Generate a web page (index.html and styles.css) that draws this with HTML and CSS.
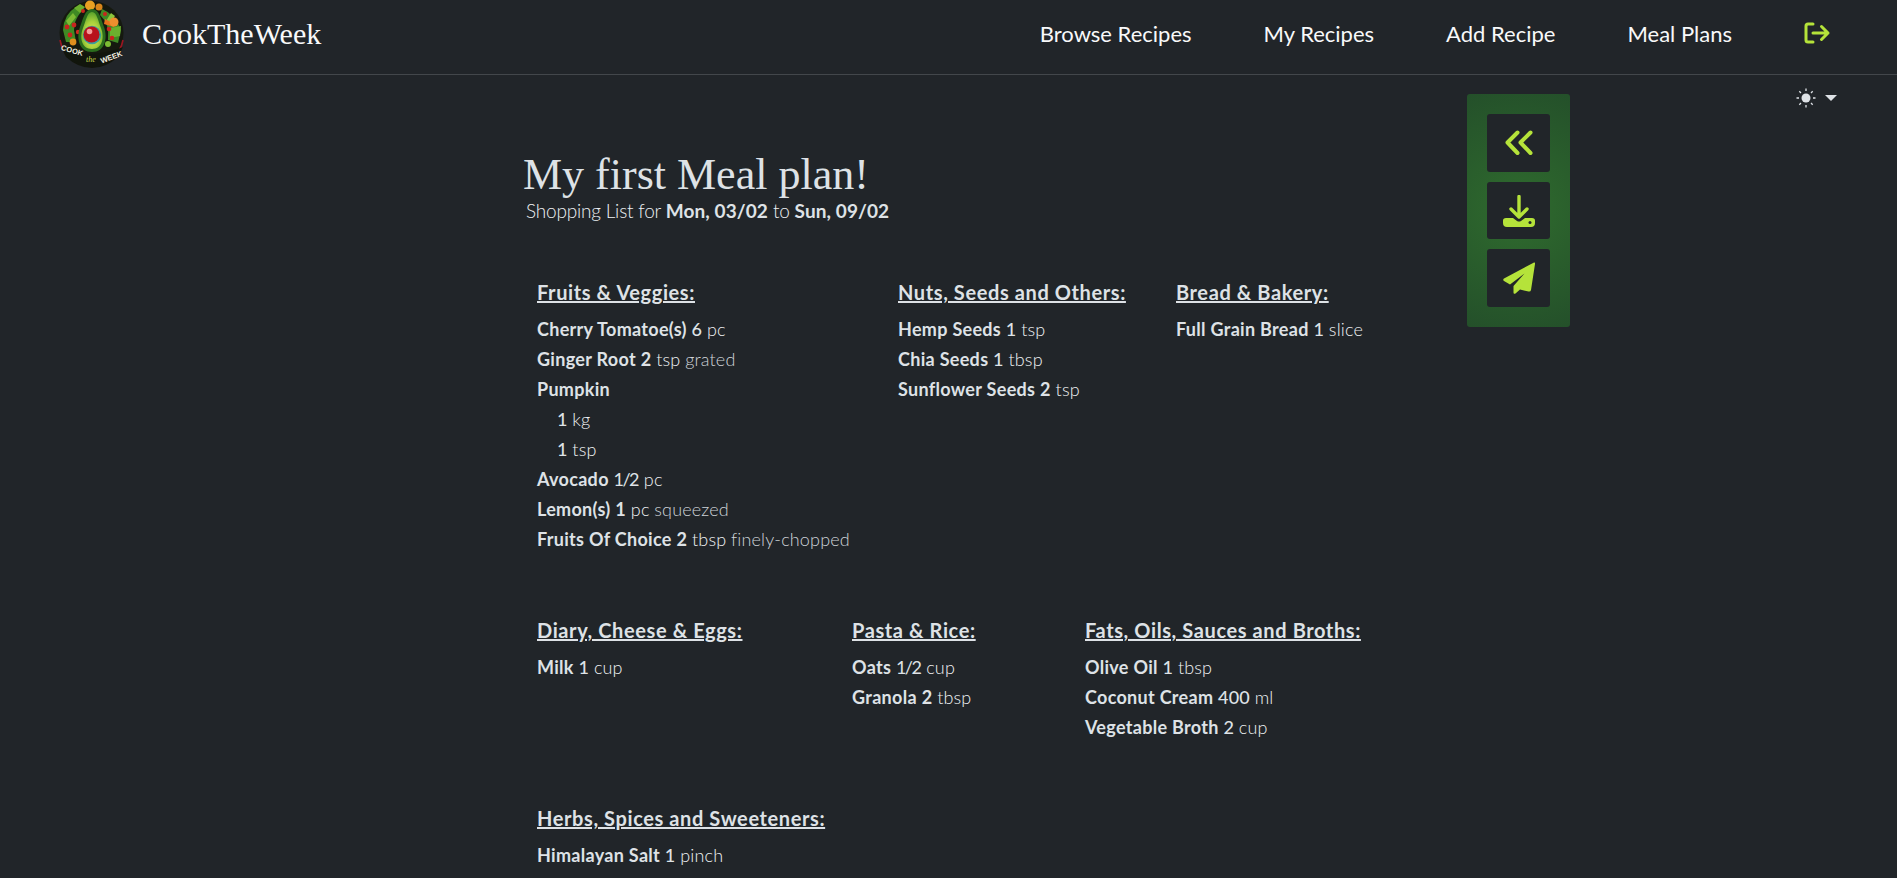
FILE: index.html
```html
<!DOCTYPE html>
<html lang="en">
<head>
<meta charset="utf-8">
<title>CookTheWeek</title>
<link rel="stylesheet" href="styles.css">
</head>
<body>
<header class="topbar">
  <a class="brand" href="#">
    <svg class="logo" viewBox="0 0 68 68" aria-hidden="true">
      <defs>
        <radialGradient id="flesh" cx="50%" cy="62%" r="60%">
          <stop offset="0" stop-color="#e3e95a"/>
          <stop offset="0.6" stop-color="#a9d13c"/>
          <stop offset="1" stop-color="#5fa52c"/>
        </radialGradient>
      </defs>
      <circle cx="33.500" cy="33" r="32" fill="#15190f"/>
      <path d="M2 40 A32 32 0 0 0 65 40" fill="none" stroke="#9c1520" stroke-width="1.600"/>
      <path d="M5 30 Q6 14 18 7 L23 12 Q16 20 16 30 L18 42 L8 42 Z" fill="#3f8a24"/>
      <path d="M16 8 L22 4 L27 7 L22 13 Z" fill="#6bb02e"/>
      <path d="M8 21 L15 13 L18 17 L11 26 Z" fill="#7cbb33"/>
      <path d="M44 9 Q57 14 63 30 L60 43 L50 40 Q52 24 42 15 Z" fill="#3f8a24"/>
      <path d="M52 28 L63 26 L62 36 L52 38 Z" fill="#6bb02e"/>
      <path d="M48 21 L53 13 L57 16 L52 24 Z" fill="#8cc63a"/>
      <path d="M47 19 L57 24 L56 27 L46 24 Z" fill="#e5721e"/>
      <circle cx="32" cy="5.500" r="5" fill="#e8a022"/>
      <circle cx="41" cy="7" r="3.500" fill="#d8851a"/>
      <circle cx="56" cy="22" r="4.500" fill="#ee8f2e"/>
      <circle cx="9" cy="27" r="2.400" fill="#c8251e"/>
      <circle cx="16" cy="25" r="2.400" fill="#c8251e"/>
      <circle cx="12" cy="35" r="2.400" fill="#c8251e"/>
      <circle cx="20" cy="32" r="2.200" fill="#d02a20"/>
      <circle cx="25" cy="11" r="2" fill="#c8251e"/>
      <circle cx="47" cy="14" r="2" fill="#c8251e"/>
      <circle cx="51" cy="29" r="2.300" fill="#c8251e"/>
      <circle cx="54" cy="38" r="2.300" fill="#c8251e"/>
      <circle cx="15" cy="42" r="3.400" fill="#e08f1e"/>
      <circle cx="50" cy="44" r="3" fill="#7cbb33"/>
      <path d="M34 9 C27 9 25 19 22 27 C18 38 21 52 34 52 C47 52 50 38 46 27 C43 19 41 9 34 9 Z" fill="#2b6d1d"/>
      <path d="M34 12 C29 12 28 21 25 28 C21 38 24 49 34 49 C44 49 47 38 43 28 C40 21 39 12 34 12 Z" fill="url(#flesh)"/>
      <circle cx="34" cy="35" r="9.200" fill="#3a9f9c"/>
      <circle cx="33.500" cy="34.500" r="8" fill="#b8121c"/>
      <circle cx="31.500" cy="31.500" r="2.800" fill="#f59a9a"/>
      <path d="M3 47 Q14 52 34 54 Q54 52 65 47 L60 57 Q48 68 34 68 Q20 68 8 57 Z" fill="#11150c"/>
      <text class="logo-word" x="3" y="53" transform="rotate(16 14 50)">COOK</text>
      <text class="logo-the" x="28" y="62">the</text>
      <text class="logo-word" x="41" y="60" transform="rotate(-20 52 54)">WEEK</text>
    </svg>
    <span class="brand-name">CookTheWeek</span>
  </a>
  <nav class="nav">
    <a href="#">Browse Recipes</a>
    <a href="#">My Recipes</a>
    <a href="#">Add Recipe</a>
    <a href="#">Meal Plans</a>
    <a href="#" class="nav-icon" aria-label="Log out">
      <svg viewBox="0 0 28 22" width="28" height="22" fill="none" stroke="currentColor" stroke-width="3" stroke-linecap="round" stroke-linejoin="round">
        <path d="M9 2 H4 Q2 2 2 4 V18 Q2 20 4 20 H9"/>
        <path d="M9 11 H24 M17.500 4.500 L24 11 L17.500 17.500"/>
      </svg>
    </a>
  </nav>
</header>

<button class="theme" aria-label="Theme">
  <svg viewBox="0 0 20 20" width="20" height="20" fill="#dee2e6" stroke="#dee2e6" stroke-width="1.300">
    <circle cx="10" cy="10" r="4.500" stroke="none"/>
    <path d="M10 0.500 V3 M10 17 V19.500 M0.500 10 H3 M17 10 H19.500 M3.300 3.300 L5 5 M15 15 L16.700 16.700 M3.300 16.700 L5 15 M15 5 L16.700 3.300"/>
  </svg>
  <span class="caret"></span>
</button>

<main class="page">
  <section class="sheet">
    <h1 class="title">My first Meal plan!</h1>
    <p class="subtitle">Shopping List for <b>Mon, 03/02</b> to <b>Sun, 09/02</b></p>

    <div class="row row-a">
      <div class="group">
        <h2>Fruits &amp; Veggies:</h2>
        <ul>
          <li><b>Cherry Tomatoe(s)</b> <span class="num">6</span> <i>pc</i></li>
          <li><b>Ginger Root</b> <b>2</b> <i>tsp</i> <em>grated</em></li>
          <li><b>Pumpkin</b></li>
          <li class="sub"><span class="num">1</span> <i>kg</i></li>
          <li class="sub"><span class="num">1</span> <i>tsp</i></li>
          <li><b>Avocado</b> <span class="num frac">1/2</span> <i>pc</i></li>
          <li><b>Lemon(s)</b> <b>1</b> <i>pc</i> <em>squeezed</em></li>
          <li><b>Fruits Of Choice</b> <b>2</b> <i>tbsp</i> <em>finely-chopped</em></li>
        </ul>
      </div>
      <div class="group">
        <h2>Nuts, Seeds and Others:</h2>
        <ul>
          <li><b>Hemp Seeds</b> <span class="num">1</span> <i>tsp</i></li>
          <li><b>Chia Seeds</b> <span class="num">1</span> <i>tbsp</i></li>
          <li><b>Sunflower Seeds</b> <b>2</b> <i>tsp</i></li>
        </ul>
      </div>
      <div class="group">
        <h2>Bread &amp; Bakery:</h2>
        <ul>
          <li><b>Full Grain Bread</b> <span class="num">1</span> <i>slice</i></li>
        </ul>
      </div>
    </div>

    <div class="row row-b">
      <div class="group">
        <h2>Diary, Cheese &amp; Eggs:</h2>
        <ul>
          <li><b>Milk</b> <span class="num">1</span> <i>cup</i></li>
        </ul>
      </div>
      <div class="group">
        <h2>Pasta &amp; Rice:</h2>
        <ul>
          <li><b>Oats</b> <span class="num frac">1/2</span> <i>cup</i></li>
          <li><b>Granola</b> <b>2</b> <i>tbsp</i></li>
        </ul>
      </div>
      <div class="group">
        <h2>Fats, Oils, Sauces and Broths:</h2>
        <ul>
          <li><b>Olive Oil</b> <span class="num">1</span> <i>tbsp</i></li>
          <li><b>Coconut Cream</b> <span class="num">400</span> <i>ml</i></li>
          <li><b>Vegetable Broth</b> <span class="num">2</span> <i>cup</i></li>
        </ul>
      </div>
    </div>

    <div class="row">
      <div class="group">
        <h2>Herbs, Spices and Sweeteners:</h2>
        <ul>
          <li><b>Himalayan Salt</b> <span class="num">1</span> <i>pinch</i></li>
        </ul>
      </div>
    </div>
  </section>

  <aside class="tools">
    <button class="tool" aria-label="Back">
      <svg viewBox="0 0 28 26" width="28" height="26" fill="none" stroke="currentColor" stroke-width="4" stroke-linecap="round" stroke-linejoin="round">
        <path d="M12.500 2.500 L2.500 12.500 L12.500 23"/>
        <path d="M25.500 2.500 L15.500 12.500 L25.500 23"/>
      </svg>
    </button>
    <button class="tool" aria-label="Download">
      <svg viewBox="0 0 32 32" width="32" height="32" fill="none">
        <path d="M16 1.500 V21 M8 14 L16 22 L24 14" stroke="currentColor" stroke-width="3.400" stroke-linecap="round" stroke-linejoin="round"/>
        <path d="M3 23 H10 L14 26 Q16 27 18 26 L22 23 H29 Q32 23 32 25.500 V28 Q32 32 28 32 H4 Q0 32 0 28 V25.500 Q0 23 3 23 Z" fill="currentColor"/>
        <circle cx="27" cy="27.500" r="1.500" fill="#212529"/>
      </svg>
    </button>
    <button class="tool" aria-label="Send">
      <svg viewBox="0 0 32 32" width="32" height="32">
        <path fill="currentColor" d="M31 0.500 Q32.500 0.300 32 2 L28 28 Q27.500 30 25.500 29.500 L17 27.500 L12.500 31.500 Q10.500 32.500 10.500 30.500 L10.500 24 L21.500 11.500 L7 22.500 L1 19 Q-0.500 17.500 1 16.500 Z"/>
      </svg>
    </button>
  </aside>
</main>
</body>
</html>
```

FILE: styles.css
```css
* { box-sizing: border-box; }

html, body {
  margin: 0;
  height: 100%;
  overflow: hidden;
  background: #212529;
  color: #dee2e6;
  font-family: "Lato", "Noto Sans", sans-serif;
}

a { color: inherit; text-decoration: none; }

.topbar {
  height: 75px;
  display: flex;
  justify-content: space-between;
  align-items: flex-start;
  padding-left: 58px;
  border-bottom: 1px solid #43474b;
}

.brand {
  display: flex;
  align-items: center;
  gap: 16px;
  height: 68px;
}

.logo { width: 68px; height: 68px; display: block; }

.logo-word {
  font-family: "Liberation Sans", sans-serif;
  font-size: 7.500px;
  font-weight: 700;
  fill: #f6f2e2;
}

.logo-the {
  font-family: "Liberation Serif", serif;
  font-size: 8px;
  font-style: italic;
  fill: #c7d94a;
}

.brand-name {
  font-family: "Liberation Serif", serif;
  font-size: 30px;
  color: #f8f9fa;
}

.nav {
  display: flex;
  align-items: center;
  height: 67px;
  padding-right: 65px;
  gap: 72px;
  font-size: 22px;
  color: #f8f9fa;
}

.nav-icon { color: #b5e33a; display: flex; margin-top: -1px; }

.theme {
  position: absolute;
  top: 88px;
  left: 1796px;
  display: flex;
  align-items: center;
  gap: 9px;
  padding: 0;
  border: 0;
  background: none;
}

.caret {
  width: 0;
  height: 0;
  border-left: 6.500px solid transparent;
  border-right: 6.500px solid transparent;
  border-top: 6.500px solid #dee2e6;
}

.page {
  display: flex;
  align-items: flex-start;
  padding-left: 523px;
}

.sheet { width: 944px; padding-top: 75px; }

.title {
  margin: 0;
  font-family: "Liberation Serif", serif;
  font-size: 44px;
  font-weight: 400;
  line-height: 50px;
}

.subtitle {
  margin: 0 0 0 3px;
  font-size: 19px;
  line-height: 22px;
  font-weight: 300;
  letter-spacing: -0.2px;
  color: #eef1f4;
}

.subtitle b { font-weight: 700; letter-spacing: 0.1px; color: #dee2e6; }

.row {
  display: grid;
  padding-left: 14px;
}

.row-a { grid-template-columns: 361px 278px 1fr; margin-top: 55px; height: 338px; }
.row-b { grid-template-columns: 315px 233px 1fr; height: 188px; }

.group h2 {
  margin: 0 0 7px;
  font-size: 20px;
  letter-spacing: 0.6px;
  line-height: 30px;
  font-weight: 700;
  text-decoration: underline;
}

.group ul { margin: 0; padding: 0; list-style: none; }

.group li {
  font-size: 18px;
  letter-spacing: 0.15px;
  line-height: 30px;
  white-space: nowrap;
}

.group li.sub { padding-left: 20px; }

.group b { font-weight: 700; letter-spacing: 0.3px; }
.group i { font-style: normal; font-weight: 300; color: #f0f2f4; }
.group em { font-style: normal; font-weight: 300; color: #ced3d8; }
.group .num { font-weight: 500; }
.group .frac { letter-spacing: -1.500px; margin-right: 1px; font-weight: 400; }

.tools {
  margin-top: 19px;
  width: 103px;
  height: 233px;
  padding: 20px;
  display: flex;
  flex-direction: column;
  gap: 10px;
  border-radius: 3px;
  background: radial-gradient(circle at 50% 50%, #2f6b2e 0%, #24502a 100%);
}

.tool {
  flex: 1;
  display: flex;
  align-items: center;
  justify-content: center;
  padding: 0;
  border: 0;
  border-radius: 3px;
  background: #212529;
  color: #b5e33a;
}
```
